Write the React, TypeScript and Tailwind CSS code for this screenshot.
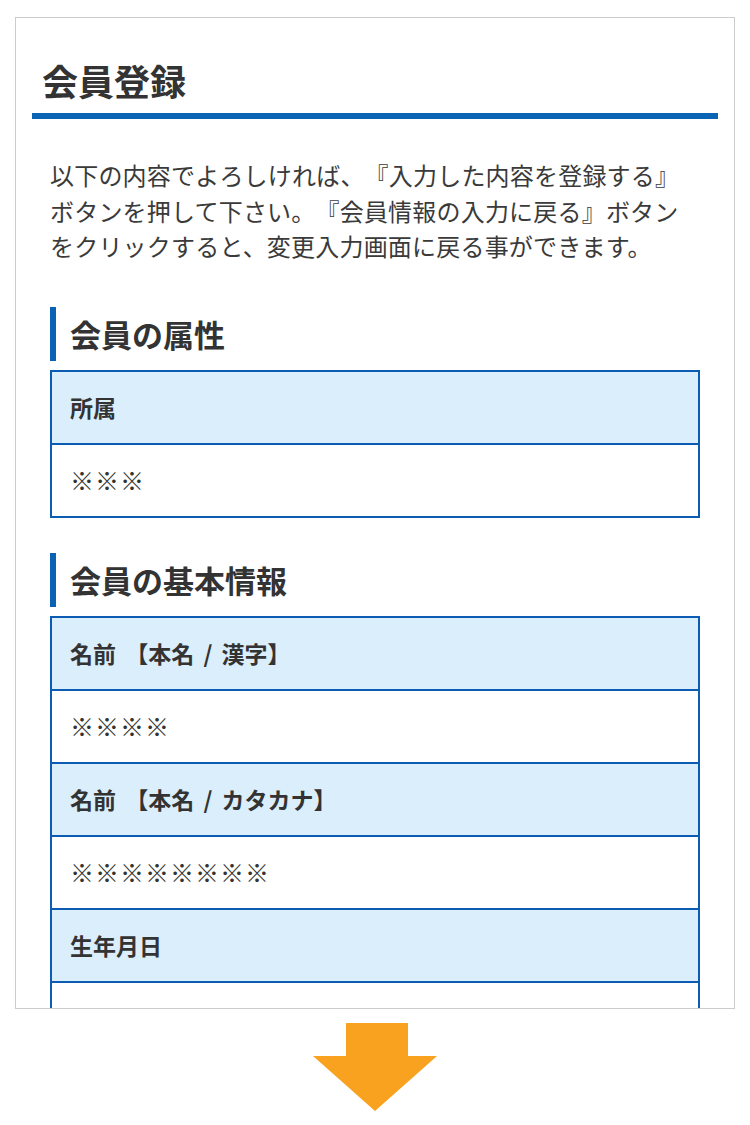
import React from 'react';

// One row pair in the confirmation table: label on blue, value on white
interface Field {
  label: string;
  value: string;
}

const attributeFields: Field[] = [{ label: '所属', value: '※※※' }];

const basicFields: Field[] = [
  { label: '名前 【本名 / 漢字】', value: '※※※※' },
  { label: '名前 【本名 / カタカナ】', value: '※※※※※※※※' },
  { label: '生年月日', value: '' },
];

const SectionTitle: React.FC<{ title: string; className?: string }> = ({ title, className }) => (
  <div className={`${className ?? ''} flex items-center border-l-[6px] border-[#0b62b4] h-[54px] pl-[14px]`}>
    <h2 className="text-[31px] font-bold leading-none text-[#333]">{title}</h2>
  </div>
);

const FieldTable: React.FC<{ fields: Field[] }> = ({ fields }) => (
  <div className="mt-[9px] border-x-2 border-t-2 border-[#0c5cb4]">
    {fields.map((field) => (
      <React.Fragment key={field.label}>
        <div className="h-[73px] flex items-center px-[18px] bg-[#daeefb] border-b-2 border-[#0c5cb4]">
          <span className="text-[23px] font-bold text-[#333] [word-spacing:4px]">{field.label}</span>
        </div>
        <div className="h-[73px] flex items-center px-[18px] bg-white border-b-2 border-[#0c5cb4]">
          <span className="text-[24px] text-[#333] tracking-[1px]">{field.value}</span>
        </div>
      </React.Fragment>
    ))}
  </div>
);

const App: React.FC = () => {
  return (
    <div
      className="w-[750px] min-h-[1125px] bg-white pt-[17px] [text-spacing-trim:space-all]"
      style={{ fontFamily: '"Noto Sans CJK JP", "Noto Sans", sans-serif' }}
    >
      {/* Phone-sized frame, cut off at the bottom */}
      <div className="mx-[15px] h-[992px] overflow-hidden border border-[#cccccc] px-4">
        <div className="pt-[38px] pb-[9px] pl-[10px]">
          <h1 className="text-[36px] font-bold leading-[48px] text-[#333]">会員登録</h1>
        </div>
        <div className="h-[6px] bg-[#0b63b3]" />

        <div className="px-[18px]">
          <p className="mt-[38px] text-[24px] leading-[35.5px] text-[#3a3a3a] whitespace-nowrap tracking-[0.2px]">
            以下の内容でよろしければ、『入力した内容を登録する』
            <br />
            ボタンを押して下さい。『会員情報の入力に戻る』ボタン
            <br />
            をクリックすると、変更入力画面に戻る事ができます。
          </p>

          <SectionTitle title="会員の属性" className="mt-[43px]" />
          <FieldTable fields={attributeFields} />

          <SectionTitle title="会員の基本情報" className="mt-[35px]" />
          <FieldTable fields={basicFields} />
        </div>
      </div>

      {/* Down arrow */}
      <div className="flex justify-center mt-[14px]">
        <svg width="124" height="88" viewBox="0 0 124 88">
          <polygon points="33,0 95,0 95,33 124,33 62,88 0,33 33,33" fill="#f9a21f" />
        </svg>
      </div>
    </div>
  );
};

export default App;
